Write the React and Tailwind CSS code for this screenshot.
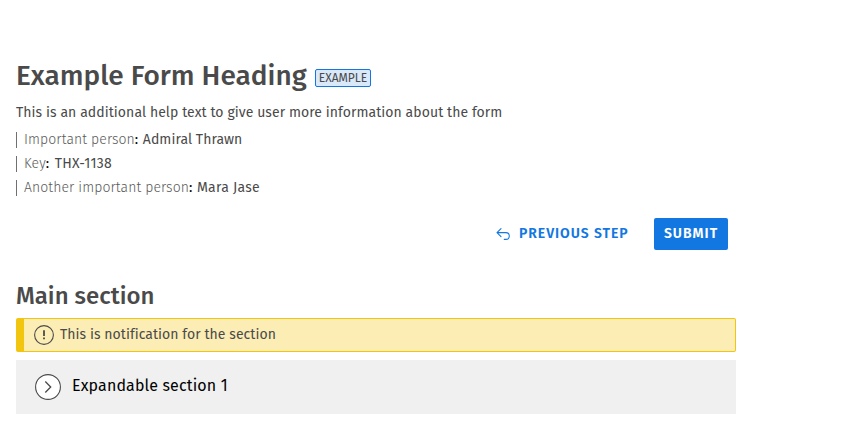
import React from 'react';

const details = [
  { label: 'Important person', value: 'Admiral Thrawn', valueClass: 'tracking-[0.06px]' },
  { label: 'Key', value: 'THX-1138', valueClass: 'pl-px tracking-[0.25px]' },
  { label: 'Another important person', value: 'Mara Jase', valueClass: 'tracking-[0.24px]' },
];

function Detail({ label, value, valueClass }) {
  return (
    <div className="flex h-6 items-center">
      <div className="flex h-4 items-center border-l border-[#707070] pl-[7px] text-sm">
        <span className="font-light tracking-[0.08px] text-[#5a5a5a]">{label}</span>
        <span className="w-2 whitespace-pre text-black">: </span>
        <span className={valueClass}>{value}</span>
      </div>
    </div>
  );
}

function BackIcon() {
  return (
    <svg className="h-4 w-4" viewBox="0 0 16 16" fill="none" stroke="currentColor" strokeWidth="1.1" strokeLinecap="round" strokeLinejoin="round">
      <path d="M6 2.7 2 6.6l4 4M2 6.6h8.9a3.4 3.4 0 0 1 0 6.8H9.3" />
    </svg>
  );
}

export default function App() {
  return (
    <main className="h-[446px] w-[752px] bg-white px-4 pt-[56px] font-['Fira_Sans','Noto_Sans',sans-serif] whitespace-nowrap text-[#4a4a4a]">
      <header>
        <div className="flex h-10 items-center">
          <h1 className="w-[291px] text-[28px] leading-10 font-medium">Example Form Heading</h1>
          <span className="mt-[4px] ml-2 flex h-[18px] w-14 items-center justify-center rounded-[2px] border border-[#1277e1] bg-[#d9e9fa] text-xs">EXAMPLE</span>
        </div>
        <p className="mt-[5px] h-6 text-sm leading-6 tracking-[0.07px]">This is an additional help text to give user more information about the form</p>
        <div className="mt-[3px]">
          {details.map((d) => <Detail key={d.label} {...d} />)}
        </div>
      </header>
      <div className="mt-[18px] flex h-8 justify-end pr-2 text-sm font-semibold tracking-[1px]">
        <button className="flex w-[168px] items-center gap-2 pl-[15px] tracking-[0.94px] text-[#1277e1]">
          <BackIcon />
          <span>PREVIOUS STEP</span>
        </button>
        <button className="ml-[6px] flex w-[74px] items-center justify-center rounded-[2px] bg-[#1277e1] text-white">SUBMIT</button>
      </div>
      <section className="mt-[30px]">
        <h2 className="h-8 text-2xl leading-8 font-medium">Main section</h2>
        <div className="mt-[6px] flex h-[34px] items-center rounded-[2px] border border-l-8 border-[#f2c511] bg-[#fcedb5] pl-[10px] text-sm">
          <svg className="mr-[6px] h-5 w-5" viewBox="0 0 20 20" fill="none" stroke="#4a4a4a">
            <circle cx="10" cy="10" r="9.4" strokeWidth="1.1" />
            <path d="M10 5.2v5.9M10 12.5v1.8" strokeWidth="1.8" />
          </svg>
          <span className="tracking-[0.06px]">This is notification for the section</span>
        </div>
        <div className="mt-2 flex h-[54px] items-center bg-[#f0f0f0] pl-[19px]">
          <svg className="mr-[11px] h-[26px] w-[26px]" viewBox="0 0 26 26" fill="none" stroke="#4a4a4a">
            <circle cx="13" cy="13" r="12.4" fill="white" strokeWidth="1.1" />
            <path d="m10.3 7.5 5.4 5.5-5.4 5.5" strokeWidth="1.3" />
          </svg>
          <span className="pb-[2px] text-base tracking-[0.13px] text-black">Expandable section 1</span>
        </div>
      </section>
    </main>
  );
}
